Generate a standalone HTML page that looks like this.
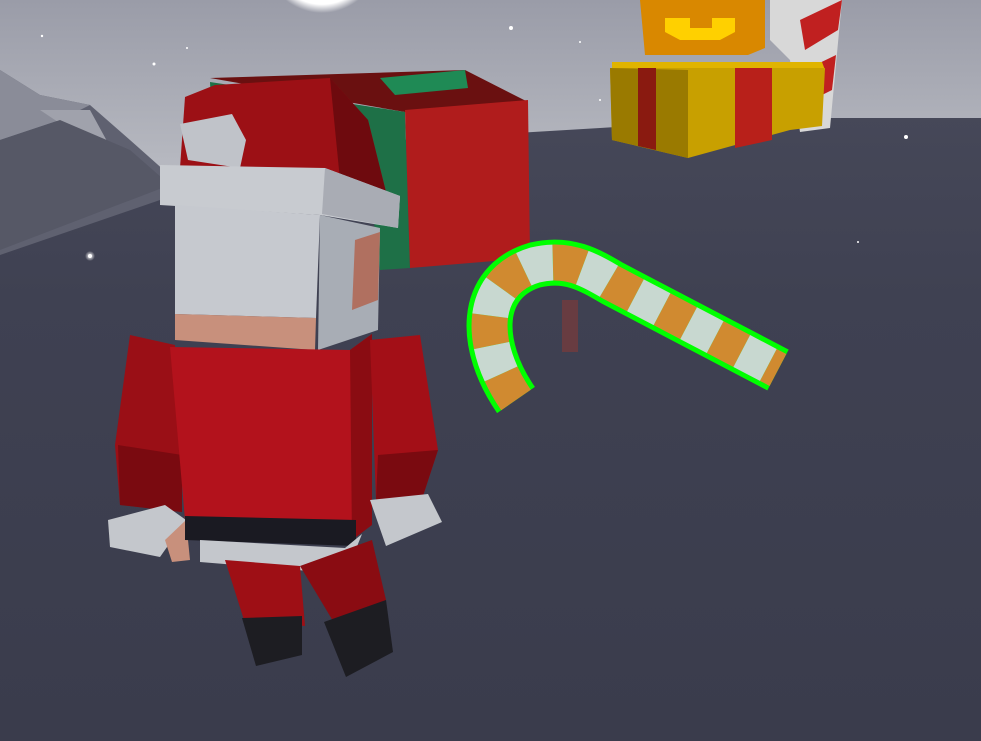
<!DOCTYPE html>
<html><head><meta charset="utf-8"><style>
html,body{margin:0;padding:0;background:#3e4050;}
svg{display:block}
</style></head><body>
<svg width="981" height="741" viewBox="0 0 981 741" xmlns="http://www.w3.org/2000/svg">
<defs>
<linearGradient id="sky" x1="0" y1="0" x2="0" y2="1">
<stop offset="0" stop-color="#9a9ca8"/><stop offset="1" stop-color="#c2c4ca"/></linearGradient>
<linearGradient id="gnd" x1="0" y1="0" x2="0" y2="1">
<stop offset="0" stop-color="#4a4c5c"/><stop offset="0.4" stop-color="#3f4152"/><stop offset="1" stop-color="#3a3c4c"/></linearGradient>
<radialGradient id="moon"><stop offset="0.85" stop-color="#fff"/><stop offset="1" stop-color="#fff" stop-opacity="0"/></radialGradient>
<radialGradient id="dot"><stop offset="0" stop-color="#fff"/><stop offset="1" stop-color="#fff" stop-opacity="0"/></radialGradient>
</defs>
<rect width="981" height="741" fill="url(#gnd)"/>
<polygon points="0,0 981,0 981,118 760,118 600,128 400,140 160,195 0,230" fill="url(#sky)"/>
<circle cx="322" cy="-45" r="58" fill="url(#moon)"/>
<polygon points="0,70 40,95 90,105 130,140 175,180 160,200 0,255" fill="#5f6170"/>
<polygon points="0,70 40,95 90,105 60,120 0,140" fill="#8a8c98"/>
<polygon points="40,110 90,110 120,165 70,130" fill="#a0a2ac"/>
<polygon points="0,140 60,120 130,150 170,185 0,250" fill="#565866"/>
<g fill="#fff">
<circle cx="90" cy="256" r="5" fill="url(#dot)"/><circle cx="90" cy="256" r="2"/>
<circle cx="511" cy="28" r="2"/><circle cx="154" cy="64" r="1.5"/><circle cx="906" cy="137" r="2"/>
<circle cx="42" cy="36" r="1.2"/><circle cx="858" cy="242" r="1"/><circle cx="600" cy="100" r="1"/>
<circle cx="187" cy="48" r="1"/><circle cx="580" cy="42" r="1"/>
</g>
<polygon points="770,0 842,0 830,128 800,132 790,60 770,40" fill="#d8d8d8"/>
<polygon points="800,20 842,0 838,30 805,50" fill="#c02020"/>
<polygon points="805,70 836,55 832,90 812,100" fill="#c02020"/>
<polygon points="612,62 822,62 825,70 612,70" fill="#e0b400"/>
<polygon points="610,68 825,68 822,126 790,130 688,158 612,140" fill="#c8a000"/>
<polygon points="610,68 688,70 688,158 612,140" fill="#9a7a00"/>
<polygon points="638,68 656,68 656,150 638,146" fill="#8a1a10"/>
<polygon points="735,68 772,68 772,140 735,148" fill="#b8201a"/>
<polygon points="640,0 765,0 765,48 748,55 645,55" fill="#d98800"/>
<polygon points="665,18 690,18 690,28 712,28 712,18 735,18 735,32 720,40 680,40 665,32" fill="#ffd000"/>
<polygon points="210,78 465,70 528,102 405,112" fill="#6a1010"/>
<polygon points="380,78 465,70 468,88 395,95" fill="#1f8a55"/>
<polygon points="210,82 405,112 410,268 380,270 370,190 215,190" fill="#1e7047"/>
<polygon points="405,110 528,100 530,258 410,268" fill="#b01c1c"/>
<path d="M516 400 C478 345,478 282,535 265 C568 257,590 270,612 283 L778 370" fill="none" stroke="#00ff00" stroke-width="46" stroke-linejoin="round"/>
<path d="M516 400 C478 345,478 282,535 265 C568 257,590 270,612 283 L778 370" fill="none" stroke="#d08a30" stroke-width="36" stroke-dasharray="30 30"/>
<path d="M516 400 C478 345,478 282,535 265 C568 257,590 270,612 283 L778 370" fill="none" stroke="#c8d8d0" stroke-width="36" stroke-dasharray="30 30" stroke-dashoffset="30"/>
<rect x="562" y="300" width="16" height="52" fill="#7a3a3a" opacity="0.7"/>
<polygon points="185,97 215,85 330,78 368,120 386,192 250,178 180,168" fill="#9c1015"/>
<polygon points="330,78 368,120 386,192 340,180" fill="#6e0a0e"/>
<polygon points="180,124 232,114 246,140 240,168 188,160" fill="#c0c3c9"/>
<polygon points="160,165 325,168 400,196 398,228 320,215 160,205" fill="#c8cbd0"/>
<polygon points="325,168 400,196 398,228 322,214" fill="#a9acb4"/>
<polygon points="175,205 320,215 316,318 175,314" fill="#c6c9cf"/>
<polygon points="175,314 316,318 315,350 175,340" fill="#c8907c"/>
<polygon points="320,215 380,228 378,330 318,350" fill="#a8adb5"/>
<polygon points="355,240 380,232 378,300 352,310" fill="#b07060"/>
<polygon points="130,335 175,345 182,512 120,505 115,445" fill="#9a0f16"/>
<polygon points="118,445 182,455 182,512 120,505" fill="#7a0a10"/>
<polygon points="170,347 350,350 372,334 370,522 185,520" fill="#b3121c"/>
<polygon points="350,350 372,334 372,525 352,540" fill="#8a0c12"/>
<polygon points="370,340 420,335 438,450 420,505 376,500" fill="#a30f17"/>
<polygon points="378,455 438,450 420,505 376,500" fill="#7a0a10"/>
<polygon points="108,520 165,505 186,520 160,557 110,547" fill="#c4c7cc"/>
<polygon points="165,540 186,520 190,560 172,562" fill="#c8907c"/>
<polygon points="370,500 428,494 442,522 386,546" fill="#c4c7cc"/>
<polygon points="185,516 356,520 356,546 185,540" fill="#1a1a22"/>
<polygon points="200,540 345,548 362,534 346,574 200,562" fill="#c4c7cc"/>
<polygon points="225,560 300,566 305,626 244,620" fill="#9e0f15"/>
<polygon points="300,566 372,540 386,600 336,626" fill="#8a0c12"/>
<polygon points="242,618 302,616 302,655 256,666" fill="#1d1d22"/>
<polygon points="324,622 386,600 393,652 346,677" fill="#1d1d22"/>
</svg>
</body></html>
